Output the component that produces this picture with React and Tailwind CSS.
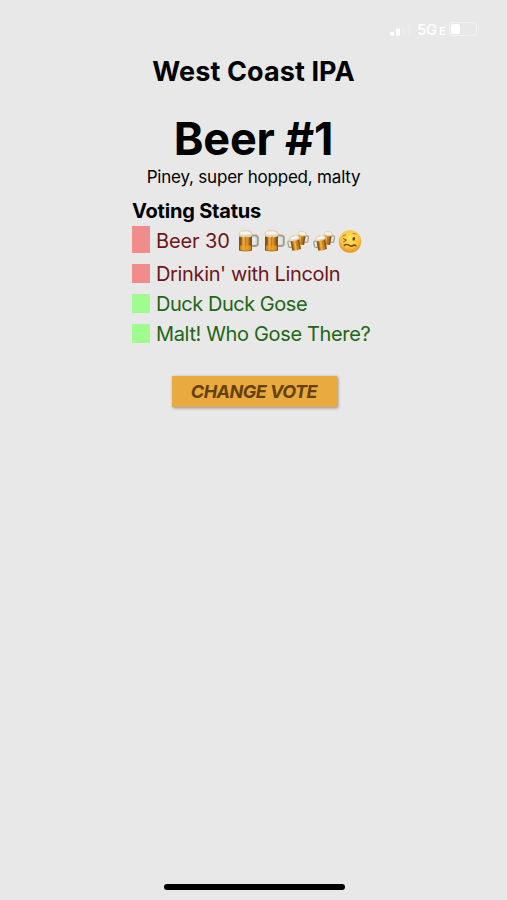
import React from 'react';

function BeerMug() {
  return (
    <svg className="h-[24px] w-[22px] shrink-0" viewBox="0 0 22 24">
      <path d="M15 6.5h3q2.800 0 2.800 2.600v5.400q0 2.600-2.800 2.600H15" fill="none" stroke="#a19e90" strokeWidth="2" />
      <path d="M15.500 8h2.200q1.400 0 1.400 1.500v4.500q0 1.500-1.400 1.500h-2.200" fill="none" stroke="#d5d2c6" strokeWidth=".7" />
      <path d="M2 4h13v17.500q-6.500 2-13 0z" fill="#bf7b1e" />
      <path d="M2 6h2.500v15.800L2 21.300zM12.500 6H15v15.300l-2.500.6z" fill="#84511a" />
      <path d="M5.500 7h2.200v14H5.500z" fill="#f0ae39" />
      <path d="M9 7h1.800v14H9z" fill="#dc9429" />
      <path d="M3 16.500h11v4.300q-5.500 1.300-11 0z" fill="#eda12a" opacity=".7" />
      <path d="M1.300 5.500q-.4-3 2.600-3.600Q6 .2 8.500 1.300q2.500-1 4.400.5 3 .6 2.700 3.700-.4 2.400-2.400 2.400-2 .8-4-.2-2 1-4 .3-3.500.3-3.900-2.500z" fill="#ddd5bf" />
      <path d="M2.700 4.200q2-2.700 4.700-1.500 2.400-.9 4.700.4 2 .3 2.200 1.900-5.500 1.500-11.600.2z" fill="#f8f4e8" />
    </svg>
  );
}

function ClinkingMugs() {
  return (
    <svg className="h-[22px] w-[22px] shrink-0" viewBox="0 0 22 22">
      <g transform="rotate(10 15 8)">
        <path d="M18 5h1.800q1.500 0 1.500 1.500v3.500q0 1.500-1.500 1.500H18" fill="none" stroke="#9f9b90" strokeWidth="1.200" />
        <path d="M10.500 4h7.800v10.500q-4 1-7.800 0z" fill="#b97620" />
        <path d="M12.500 6h1.700v8h-1.700z" fill="#f0ae40" />
        <path d="M16.600 6h1.500v8.300h-1.500z" fill="#83511d" />
        <path d="M9.700 4.600q-.2-3 2.700-3 1.800-1.500 3.400-.2 3.200-.3 3 2.800-.3 2-2.200 1.600-1.600 1-3.100.1-3.200 1.200-3.800-1.300z" fill="#ddd5bf" />
        <path d="M11 3.500q1-1.800 3-.9 2-1.300 3.400.5l.2 1.200q-3.400.8-6.600 0z" fill="#faf5e8" />
      </g>
      <g transform="rotate(-10 8 14)">
        <path d="M4.300 10H2.700q-1.500 0-1.500 1.500v3.500q0 1.500 1.500 1.500h1.600" fill="none" stroke="#9f9b90" strokeWidth="1.200" />
        <path d="M4 8h9v12q-4.500 1-9 0z" fill="#c28124" />
        <path d="M4.300 10h1.400v10H4.300zM11.500 10h1.300v10h-1.300z" fill="#84501b" />
        <path d="M7 10h2v10H7z" fill="#f4b13c" />
        <path d="M3 9q-.5-3 2.700-3.200 2-1.700 4-.2 4-.5 4 2.800-.2 2.200-2.500 1.800-1.700 1-3.400.1Q3.500 11.500 3 9z" fill="#dfd7c2" />
        <path d="M4.500 8q1.200-2 3.500-1 2.500-1.400 4.400 1v.8q-4 .8-7.900 0z" fill="#fbf6ea" />
      </g>
    </svg>
  );
}

function WoozyFace() {
  return (
    <svg className="h-[23px] w-[24px] shrink-0" viewBox="0 0 24 23">
      <defs>
        <radialGradient id="face" cx="50%" cy="35%" r="65%">
          <stop offset="0" stopColor="#ffe562" />
          <stop offset=".65" stopColor="#fbc33b" />
          <stop offset="1" stopColor="#e48c24" />
        </radialGradient>
      </defs>
      <circle cx="12" cy="11.5" r="11.2" fill="url(#face)" />
      <path d="M4.500 6.500q1.500-1.700 3.500-1.500M14.500 3.800q2.400-1 4 .8" fill="none" stroke="#ae7324" strokeWidth=".9" />
      <path d="M5 8.500l3.500 1.600L5.300 12" fill="none" stroke="#79501b" strokeWidth="1" />
      <ellipse cx="15.800" cy="8.800" rx="1.300" ry="1.900" fill="#65400f" />
      <path d="M6.300 15.500q2-2 4.300-.5 2.600 2 4.300.6 1.700-1.300 3 .2" fill="none" stroke="#704110" strokeWidth="1.400" strokeLinecap="round" />
    </svg>
  );
}

function StatusBar() {
  return (
    <header className="flex h-[50px] shrink-0 items-start justify-end pr-[28px] pt-[21px] text-white">
      <svg className="mt-[3px] h-[12px] w-[23px]" viewBox="0 0 23 12">
        <path d="M1 8h4v3.500H1zM7 4.500h4v7H7z" fill="white" />
        <path d="M13 3h3v8.500h-3zM18.500 0h3v11.500h-3z" fill="white" opacity=".15" />
      </svg>
      <div className="ml-[5px] flex w-[28px] items-baseline text-[15px] font-medium leading-[17px] tracking-[-0.3px]">
        <span>5G</span><span className="ml-[2px] text-[11px] font-semibold">E</span>
      </div>
      <div className="ml-[4px] mt-px flex h-[14px] w-[28px] rounded-[3px] border border-white/45 p-px">
        <span className="h-[10px] w-[9px] rounded-[2px] bg-white" />
      </div>
      <span className="ml-px mt-[5px] h-[5px] w-px bg-white/25" />
    </header>
  );
}

export default function App() {
  return (
    <div className="flex h-[900px] w-[507px] flex-col overflow-hidden bg-[#e8e8e8] font-['Inter','Liberation_Sans',sans-serif] text-black">
      <StatusBar />
      <main className="flex flex-1 flex-col items-center">
        <h1 className="mt-[5px] whitespace-nowrap text-[27px] font-bold leading-[34px] tracking-[0.1px]">West Coast IPA</h1>
        <h2 className="mt-[23px] whitespace-nowrap text-[45px] font-bold leading-[54px] tracking-[-0.2px]">Beer #1</h2>
        <p className="whitespace-nowrap text-[17px] leading-[22px] tracking-[-0.2px]">Piney, super hopped, malty</p>
        <section className="mt-[11px] w-[243px]">
          <h3 className="whitespace-nowrap text-[20px] font-bold leading-[24px] tracking-[-0.2px]">Voting Status</h3>
          <ul className="mt-[3px] flex flex-col text-[20px]">
            <li className="flex h-[27px] items-center text-[#6b1717]">
              <span className="h-[27px] w-[18px] shrink-0 bg-[#f08c8c]" />
              <span className="ml-[6px] mt-[3px] w-[81px] whitespace-nowrap tracking-[-0.1px]">Beer 30</span>
              <span className="mt-[3px] flex w-[126px] shrink-0 items-center">
                <BeerMug /><span className="w-[4px]" /><BeerMug /><span className="w-[2px]" />
                <ClinkingMugs /><span className="w-[4px]" /><ClinkingMugs /><span className="w-[3px]" /><WoozyFace />
              </span>
            </li>
            <li className="mt-[11px] flex h-[19px] items-center text-[#6b1717]">
              <span className="h-[19px] w-[18px] bg-[#f08c8c]" />
              <span className="ml-[6px] whitespace-nowrap tracking-[-0.35px]">Drinkin' with Lincoln</span>
            </li>
            <li className="mt-[11px] flex h-[19px] items-center text-[#216515]">
              <span className="h-[19px] w-[18px] bg-[#a0fc90]" />
              <span className="ml-[6px] whitespace-nowrap tracking-[-0.47px]">Duck Duck Gose</span>
            </li>
            <li className="mt-[11px] flex h-[19px] items-center text-[#216515]">
              <span className="h-[19px] w-[18px] bg-[#a0fc90]" />
              <span className="ml-[6px] whitespace-nowrap tracking-[-0.35px]">Malt! Who Gose There?</span>
            </li>
          </ul>
        </section>
        <button className="ml-px mt-[33px] h-[31px] w-[165px] whitespace-nowrap bg-[#e9aa40] text-[18px] font-bold italic leading-[31px] tracking-[-0.5px] text-[#654008] shadow-[1px_1px_3px_rgba(0,0,0,0.4)]">CHANGE VOTE</button>
      </main>
      <footer className="flex h-[20px] shrink-0 justify-center pt-[4px]">
        <div className="ml-px h-[6px] w-[181px] rounded-full bg-black" />
      </footer>
    </div>
  );
}
